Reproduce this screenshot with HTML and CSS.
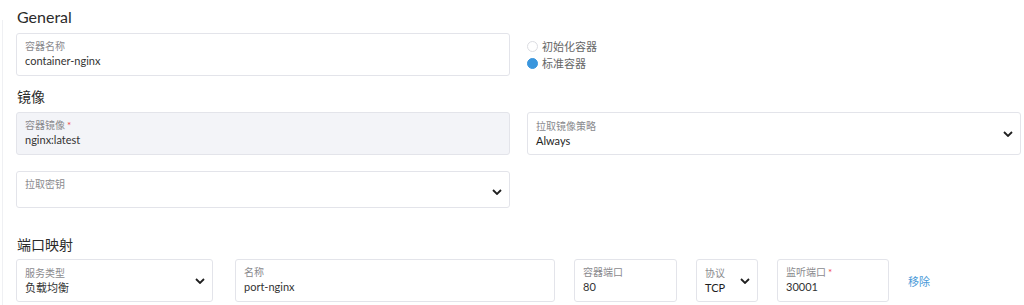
FILE: index.html
```html
<!DOCTYPE html>
<html lang="zh-CN">
<head>
    <meta charset="UTF-8">
    <meta name="viewport" content="width=device-width, initial-scale=1.0">
    <title>容器配置</title>
    <link rel="stylesheet" href="styles.css">
</head>
<body>
    <div class="form">
        <h2 class="section-title">General</h2>
        <div class="row">
            <div class="field">
                <div class="label">容器名称</div>
                <div class="value">container-nginx</div>
            </div>
            <div class="radios">
                <div class="radio"><span class="dot"></span>初始化容器</div>
                <div class="radio checked"><span class="dot"></span>标准容器</div>
            </div>
        </div>

        <h3 class="section-title cn">镜像</h3>
        <div class="row">
            <div class="field disabled">
                <div class="label">容器镜像<span class="req">*</span></div>
                <div class="value">nginx:latest</div>
            </div>
            <div class="field select">
                <div class="text">
                    <div class="label">拉取镜像策略</div>
                    <div class="value dark">Always</div>
                </div>
                <svg class="chevron" width="10" height="6" viewBox="0 0 10 6"><polyline points="1,1 5,5 9,1" fill="none" stroke="#1f1f1f" stroke-width="1.8"/></svg>
            </div>
        </div>
        <div class="row spaced">
            <div class="field select short">
                <div class="text">
                    <div class="label">拉取密钥</div>
                </div>
                <svg class="chevron low" width="10" height="6" viewBox="0 0 10 6"><polyline points="1,1 5,5 9,1" fill="none" stroke="#1f1f1f" stroke-width="1.8"/></svg>
            </div>
        </div>

        <h3 class="section-title cn ports-title">端口映射</h3>
        <div class="ports">
            <div class="field select w-type">
                <div class="text">
                    <div class="label">服务类型</div>
                    <div class="value">负载均衡</div>
                </div>
                <svg class="chevron" width="10" height="6" viewBox="0 0 10 6"><polyline points="1,1 5,5 9,1" fill="none" stroke="#1f1f1f" stroke-width="1.8"/></svg>
            </div>
            <div class="field w-name">
                <div class="label">名称</div>
                <div class="value">port-nginx</div>
            </div>
            <div class="field w-port">
                <div class="label">容器端口</div>
                <div class="value">80</div>
            </div>
            <div class="field select w-proto">
                <div class="text">
                    <div class="label">协议</div>
                    <div class="value dark">TCP</div>
                </div>
                <svg class="chevron" width="10" height="6" viewBox="0 0 10 6"><polyline points="1,1 5,5 9,1" fill="none" stroke="#1f1f1f" stroke-width="1.8"/></svg>
            </div>
            <div class="field w-listen">
                <div class="label">监听端口<span class="req">*</span></div>
                <div class="value">30001</div>
            </div>
            <a class="remove" href="#">移除</a>
        </div>
    </div>
</body>
</html>
```

FILE: styles.css
```css
body {
    margin: 0;
    background: #fff linear-gradient(#eff0f3, #eff0f3) 2px 20px / 1px 100% no-repeat;
    color: #333;
    font-family: Lato, "Noto Sans CJK SC", sans-serif;
    overflow: hidden;
}

.form {
    padding: 7px 0 0 16px;
}

.section-title {
    margin: 0 0 6px 1px;
    font-size: 16px;
    font-weight: 400;
    line-height: 20px;
    color: #2b2b2b;
}

.section-title.cn {
    margin: 11px 0 5px 1px;
    font-size: 14px;
}

.section-title.ports-title {
    margin-top: 27px;
    margin-bottom: 4px;
}

.row {
    display: grid;
    grid-template-columns: 494px 494px;
    column-gap: 17px;
}

.row.spaced {
    margin-top: 16px;
}

.field {
    box-sizing: border-box;
    height: 43px;
    padding: 5px 8px 0;
    border: 1px solid #e3e4ea;
    border-radius: 3px;
    background: #fff;
}

.field.short {
    height: 37px;
}

.field.disabled {
    background: #f3f4f8;
}

.label {
    font-size: 10px;
    line-height: 13px;
    color: #8a8a8e;
    padding-top: 1px;
}

.req {
    color: #f04848;
    margin-left: 2px;
}

.value {
    font-size: 11px;
    line-height: 16px;
    color: #333;
}

.value.dark {
    color: #1e1e1e;
}

.field.select {
    display: flex;
    align-items: center;
    padding: 0 7px 0 8px;
}

.field.select .text {
    flex: 1;
    padding-top: 1px;
}

.field.short .text {
    align-self: flex-start;
    padding-top: 5px;
}

.chevron {
    flex: none;
    margin-top: 1px;
}

.chevron.low {
    margin-top: 4px;
}

.radios {
    padding-top: 5px;
}

.radio {
    display: flex;
    align-items: center;
    font-size: 11px;
    line-height: 17px;
    color: #666;
}

.dot {
    box-sizing: border-box;
    width: 11px;
    height: 11px;
    margin-right: 4px;
    border: 1px solid #dcdde2;
    border-radius: 50%;
    background: #fff;
}

.radio.checked .dot {
    border-color: #3a96dd;
    background: #3a96dd;
}

.ports {
    display: flex;
    align-items: center;
    gap: 19px;
}

.w-type { width: 197px; margin-right: 3px; }
.w-name { width: 320px; }
.w-port { width: 103px; }
.w-proto { width: 62px; }
.w-listen { width: 112px; }

.remove {
    font-size: 11px;
    color: #4a9ad8;
    text-decoration: none;
    margin-top: 1px;
}
```
